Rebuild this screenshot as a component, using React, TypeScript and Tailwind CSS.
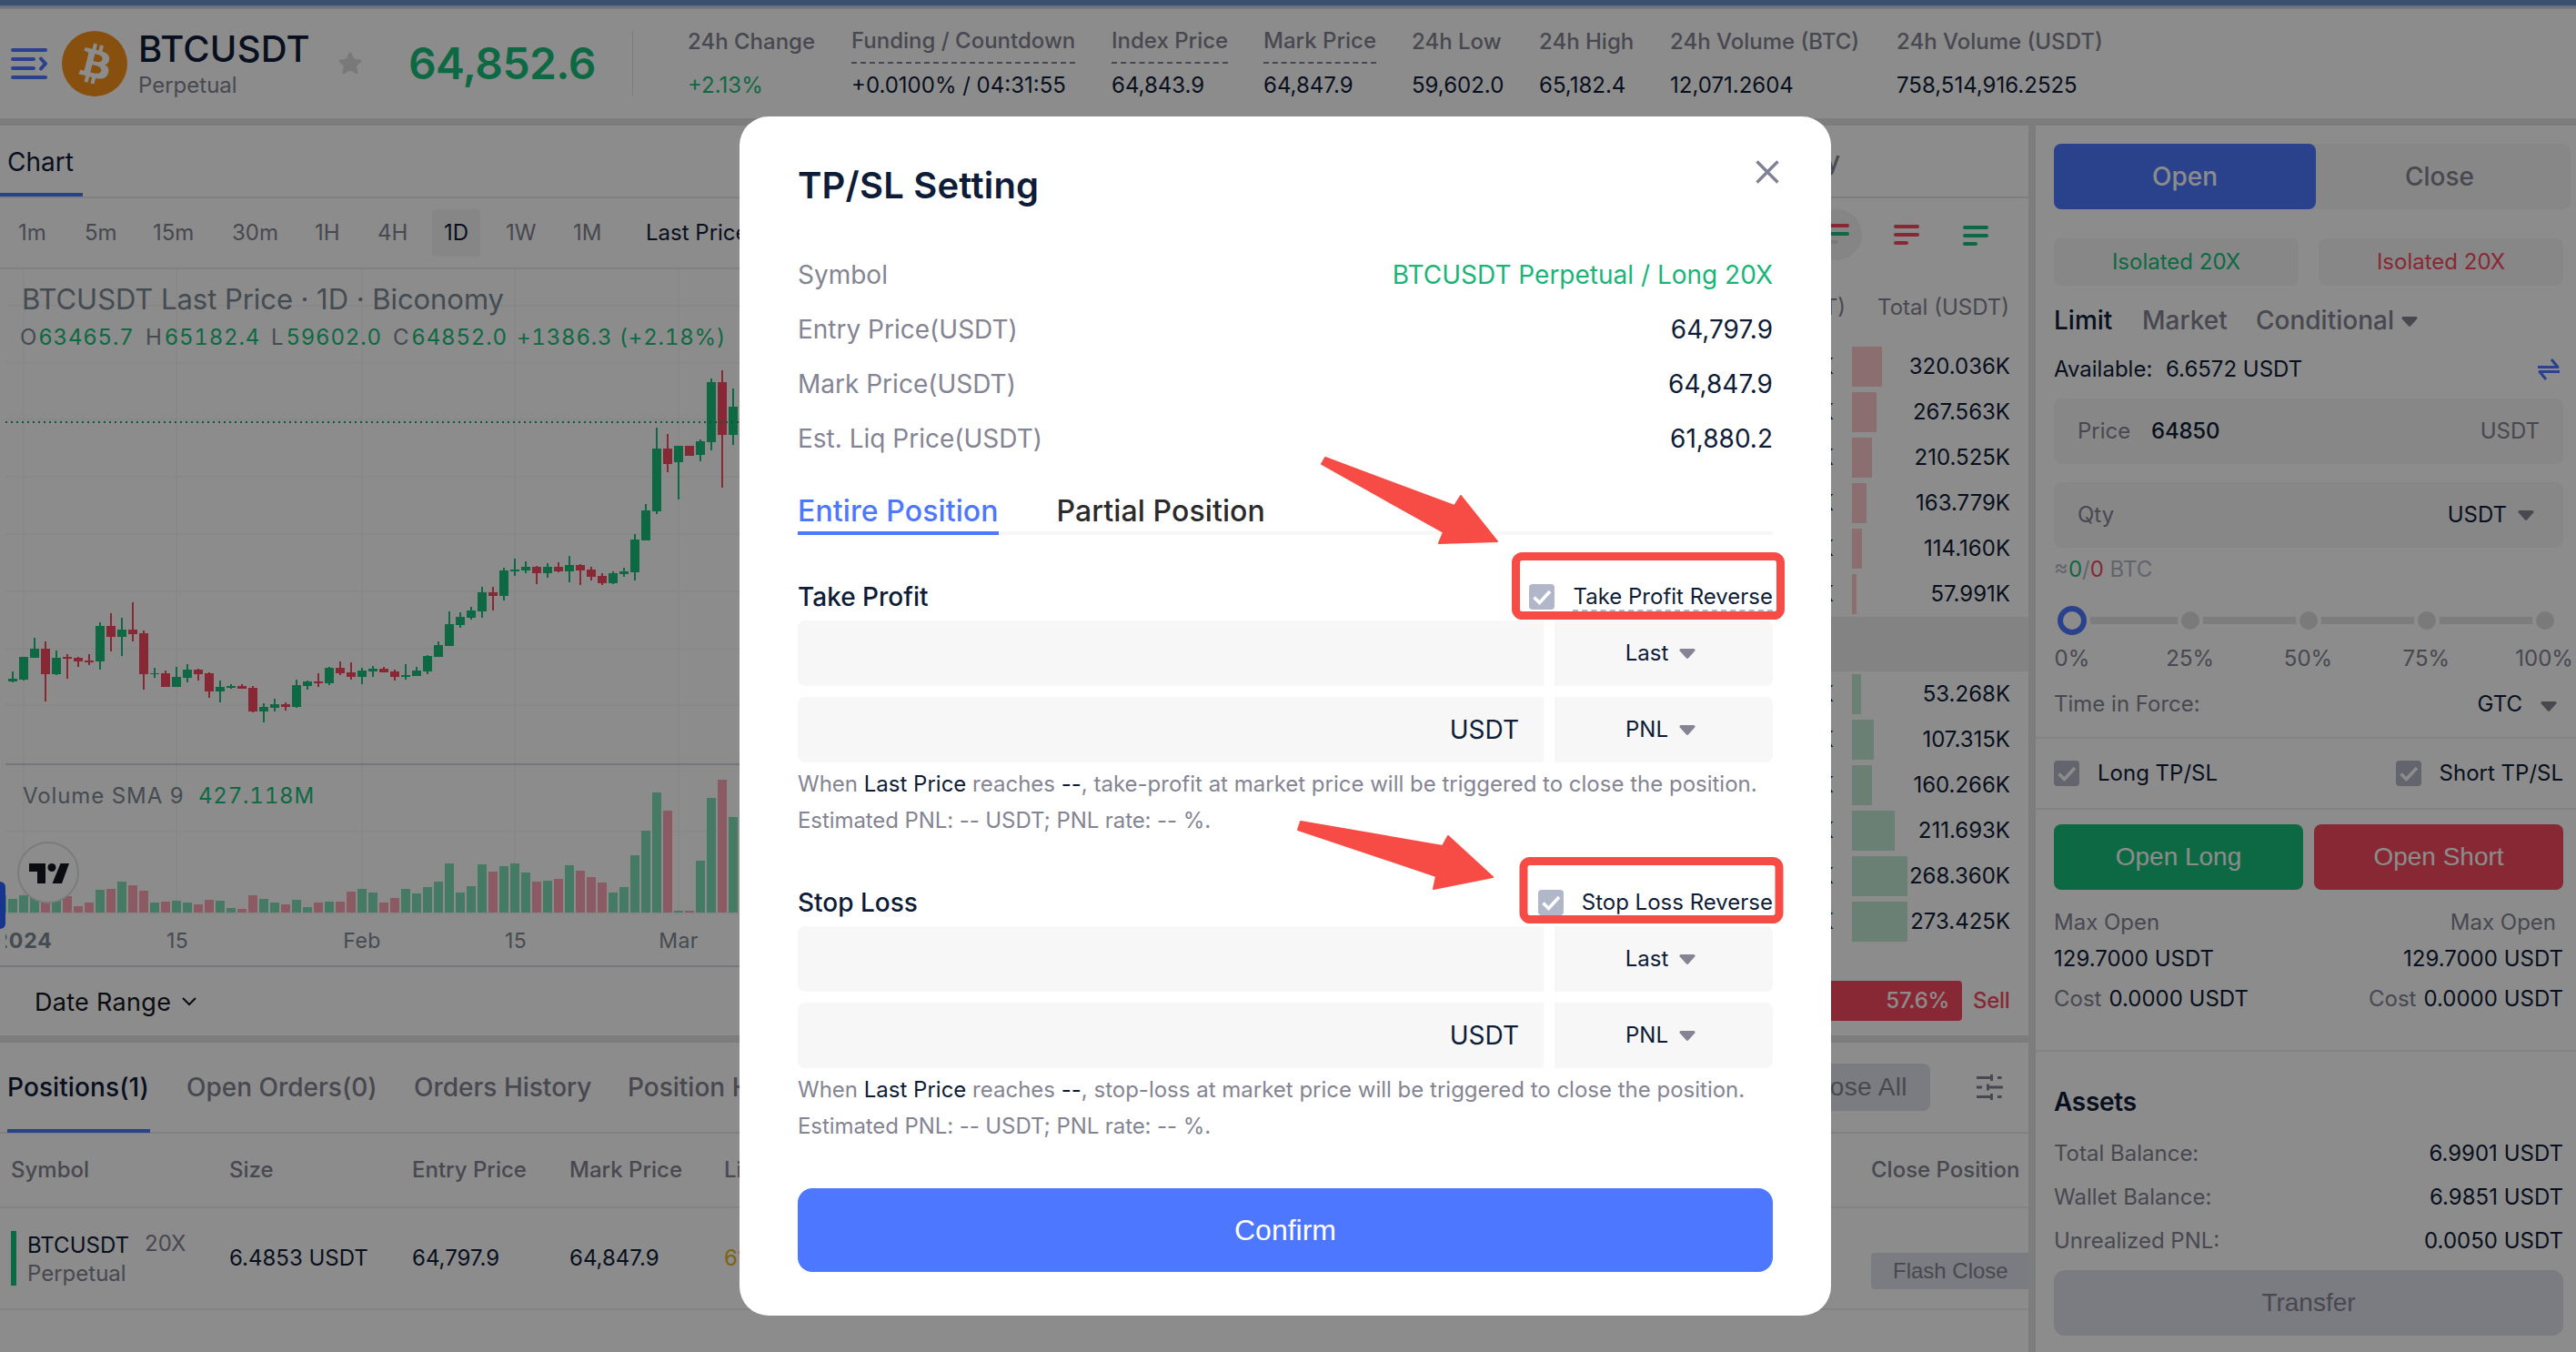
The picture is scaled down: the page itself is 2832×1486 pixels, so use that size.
import type { ReactNode } from 'react';
import clsx from 'clsx';

// ─── Types & Interfaces ──────────────────────────────────────────
interface Stat {
  label: string;
  value: string;
  width: string;
  dashed?: boolean;
  up?: boolean;
}

type Side = 'g' | 'r';
// side, high, body top, body bottom, low, volume top
type Candle = [Side, number, number, number, number, number];

// ─── Data ─────────────────────────────────────────────────────────
const STATS: Stat[] = [
  { label: '24h Change', value: '+2.13%', width: 'w-[180px]', up: true },
  { label: 'Funding / Countdown', value: '+0.0100% / 04:31:55', width: 'w-[286px]', dashed: true },
  { label: 'Index Price', value: '64,843.9', width: 'w-[167px]', dashed: true },
  { label: 'Mark Price', value: '64,847.9', width: 'w-[163px]', dashed: true },
  { label: '24h Low', value: '59,602.0', width: 'w-[140px]' },
  { label: '24h High', value: '65,182.4', width: 'w-[144px]' },
  { label: '24h Volume (BTC)', value: '12,071.2604', width: 'w-[249px]' },
  { label: '24h Volume (USDT)', value: '758,514,916.2525', width: 'w-[260px]' },
];

const INTERVALS = [
  { label: '1m', width: 'w-[73px]' },
  { label: '5m', width: 'w-[75px]' },
  { label: '15m', width: 'w-[87px]' },
  { label: '30m', width: 'w-[91px]' },
  { label: '1H', width: 'w-[69px]' },
  { label: '4H', width: 'w-[60px]' },
];

const ASKS = [
  { total: '320.036K', width: 33 },
  { total: '267.563K', width: 27 },
  { total: '210.525K', width: 22 },
  { total: '163.779K', width: 16 },
  { total: '114.160K', width: 11 },
  { total: '57.991K', width: 5 },
];

const BIDS = [
  { total: '53.268K', width: 10 },
  { total: '107.315K', width: 24 },
  { total: '160.266K', width: 22 },
  { total: '211.693K', width: 47 },
  { total: '268.360K', width: 61 },
  { total: '273.425K', width: 61 },
];

const CANDLES: Candle[] = [
  ['g', 1074, 1098, 1107, 1110, 396], ['g', 1026, 1026, 1101, 1104, 386], ['g', 963, 999, 1029, 1029, 384],
  ['r', 975, 999, 1083, 1173, 380], ['g', 1005, 1029, 1083, 1086, 392], ['r', 1017, 1026, 1032, 1098, 388],
  ['r', 1026, 1029, 1041, 1059, 414], ['r', 1017, 1038, 1044, 1053, 405], ['g', 912, 924, 1041, 1068, 372],
  ['r', 882, 924, 960, 1008, 370], ['g', 897, 936, 960, 1023, 351], ['r', 846, 936, 951, 975, 360],
  ['r', 939, 948, 1083, 1134, 374], ['g', 1062, 1080, 1083, 1095, 405], ['r', 1071, 1080, 1125, 1125, 403],
  ['g', 1059, 1092, 1125, 1125, 400], ['g', 1050, 1068, 1095, 1110, 405], ['r', 1065, 1068, 1083, 1104, 410],
  ['r', 1077, 1080, 1140, 1161, 398], ['g', 1104, 1125, 1140, 1176, 400], ['g', 1116, 1122, 1128, 1131, 419],
  ['r', 1116, 1122, 1131, 1131, 421], ['r', 1122, 1128, 1206, 1209, 386], ['g', 1179, 1191, 1206, 1242, 396],
  ['g', 1164, 1182, 1194, 1206, 405], ['r', 1176, 1182, 1191, 1203, 410], ['g', 1101, 1119, 1191, 1194, 398],
  ['g', 1104, 1107, 1122, 1134, 417], ['r', 1080, 1107, 1113, 1125, 405], ['g', 1059, 1062, 1113, 1119, 403],
  ['r', 1041, 1062, 1080, 1086, 403], ['r', 1044, 1077, 1092, 1101, 377], ['g', 1062, 1071, 1092, 1116, 370],
  ['g', 1056, 1065, 1074, 1092, 379], ['r', 1059, 1065, 1077, 1077, 405], ['r', 1068, 1074, 1092, 1104, 393],
  ['g', 1050, 1086, 1092, 1101, 370], ['g', 1059, 1071, 1089, 1089, 381], ['g', 1020, 1023, 1074, 1083, 365],
  ['g', 975, 987, 1026, 1026, 351], ['g', 876, 918, 990, 990, 304], ['g', 879, 894, 921, 930, 379],
  ['g', 861, 873, 897, 903, 363], ['g', 795, 813, 876, 897, 306], ['r', 795, 813, 825, 873, 325],
  ['g', 732, 741, 825, 840, 311], ['g', 702, 738, 744, 759, 304], ['g', 711, 729, 741, 750, 327],
  ['r', 726, 729, 750, 786, 351], ['g', 717, 729, 750, 765, 348], ['r', 714, 729, 744, 747, 344],
  ['g', 693, 723, 744, 780, 308], ['r', 720, 723, 741, 789, 323], ['r', 729, 738, 762, 774, 339],
  ['r', 750, 759, 783, 789, 353], ['g', 744, 750, 783, 786, 379], ['g', 732, 744, 753, 762, 365],
  ['g', 621, 639, 747, 774, 283], ['g', 522, 543, 642, 642, 219], ['g', 270, 339, 546, 555, 120],
  ['r', 291, 339, 390, 417, 167], ['g', 330, 330, 384, 507, 426], ['r', 330, 330, 363, 363, 426],
  ['g', 309, 315, 360, 381, 297], ['g', 108, 120, 318, 345, 134], ['r', 81, 120, 294, 468, 87],
  ['g', 141, 201, 294, 327, 184],
];

const priceY = (v: number) => 84 + v / 3;
const volumeY = (v: number) => 524 + v / 2.354;

// ─── Small pieces ─────────────────────────────────────────────────
function Caret({ className }: { className?: string }) {
  return (
    <svg viewBox="0 0 18 11" className={clsx('h-[11px] w-[18px] shrink-0 fill-[#848493]', className)}>
      <path d="M2 0h14a1.6 1.6 0 0 1 1.2 2.6l-7 7.6a1.6 1.6 0 0 1-2.4 0l-7-7.6A1.6 1.6 0 0 1 2 0z" />
    </svg>
  );
}

function Check({ className }: { className?: string }) {
  return (
    <svg viewBox="0 0 28 28" className={clsx('h-7 w-7 shrink-0', className)}>
      <rect width="28" height="28" rx="4" fill="#b2b6c9" />
      <path d="M5.5 14.5l6 6L23 8" fill="none" stroke="#fff" strokeWidth="3.6" />
    </svg>
  );
}

function DepthIcon({ colors }: { colors: string[] }) {
  return (
    <svg viewBox="0 0 28 24" className="h-6 w-7">
      <rect x="0" y="0" width="28" height="4" rx="2" fill={colors[0]} />
      <rect x="0" y="9" width="28" height="4" rx="2" fill={colors[1]} />
      <rect x="0" y="18" width="16" height="4" rx="2" fill={colors[2]} />
    </svg>
  );
}

// ─── Header ───────────────────────────────────────────────────────
function Header() {
  return (
    <header className="flex h-[120px] items-center">
      <svg viewBox="0 0 40 36" className="ml-3 h-9 w-10 shrink-0" fill="none" stroke="#4d77ff" strokeWidth="4" strokeLinecap="round">
        <path d="M2 3h36M2 13h23M2 23h23M2 33h36" />
        <path d="M33 12.5l5 5.500-5 5.500" strokeLinejoin="round" />
      </svg>
      <svg viewBox="0 0 32 32" className="ml-4 h-[72px] w-[72px] shrink-0">
        <circle cx="16" cy="16" r="16" fill="#f7931a" />
        <path
          fill="#fff"
          d="M23.189 14.020c.314-2.096-1.283-3.223-3.465-3.975l.708-2.840-1.728-.430-.690 2.765c-.454-.114-.920-.220-1.385-.326l.695-2.783L15.596 6l-.708 2.839c-.376-.086-.746-.170-1.104-.260l.002-.009-2.384-.595-.460 1.846s1.283.294 1.256.312c.700.175.826.638.805 1.006l-.806 3.235c.048.012.110.030.180.057l-.183-.045-1.130 4.532c-.086.212-.303.531-.793.410.018.025-1.256-.313-1.256-.313l-.858 1.978 2.250.561c.418.105.828.215 1.231.318l-.715 2.872 1.727.430.708-2.840c.472.127.930.245 1.378.357l-.706 2.828 1.728.430.715-2.866c2.948.558 5.164.333 6.097-2.333.752-2.146-.037-3.385-1.588-4.192 1.130-.260 1.980-1.003 2.207-2.538zm-3.950 5.538c-.533 2.147-4.148.986-5.320.695l.950-3.805c1.172.293 4.929.872 4.370 3.110zm.535-5.569c-.487 1.953-3.495.960-4.470.717l.860-3.450c.975.243 4.118.696 3.610 2.733z"
        />
      </svg>
      <div className="ml-3 flex w-[219px] flex-col pt-0.5">
        <span className="text-[40px] font-medium leading-[46px] tracking-[0.2px] text-[#0f1c38]">BTCUSDT</span>
        <span className="text-2xl leading-[34px] text-[#848493]">Perpetual</span>
      </div>
      <svg viewBox="0 0 28 28" className="h-7 w-7 shrink-0 fill-[#dcdcdc]">
        <path d="M14 1.500c.8 0 1.300.6 1.600 1.300l2.600 5.800 6.500.8c1.900.2 2.400 1.600 1.100 2.900l-4.600 4.300 1.200 6.400c.3 1.900-.8 2.700-2.500 1.800L14 21.600l-5.900 3.200c-1.700.9-2.800.1-2.500-1.800l1.200-6.400-4.600-4.300c-1.300-1.300-.8-2.700 1.100-2.900l6.500-.8 2.600-5.800c.3-.7.8-1.300 1.600-1.300z" />
      </svg>
      <span className="ml-[50px] w-[246px] text-5xl font-semibold tracking-[-0.6px] text-[#19c07b]">64,852.6</span>
      <div className="h-[72px] w-px bg-[#e6e6e6]" />
      <div className="ml-[60px] flex">
        {STATS.map((s) => (
          <div key={s.label} className={clsx('flex shrink-0 flex-col items-start whitespace-nowrap text-2xl', s.width)}>
            <span
              className={clsx(
                'h-[37px] font-medium',
                s.dashed ? 'border-b-2 border-dashed border-[#848493] leading-[23px]' : 'leading-[25px]',
                'text-[#848493]',
              )}
            >
              {s.label}
            </span>
            <span className={clsx('mt-[11px] leading-[26px]', s.up ? 'text-[#19c07b]' : 'text-[#0f1c38]')}>{s.value}</span>
          </div>
        ))}
      </div>
    </header>
  );
}

// ─── Chart ────────────────────────────────────────────────────────
function PriceChart() {
  return (
    <div className="relative h-[765px]">
      <svg viewBox="0 0 1500 765" className="h-[765px] w-[1500px]" shapeRendering="crispEdges">
        <g stroke="#f7f7f8" strokeWidth="2">
          {[26, 194, 398, 566, 746].map((x) => (
            <path key={x} d={`M${x} 0V708`} />
          ))}
          {[40, 103, 165, 228, 291, 354, 417, 479, 618, 708].map((y) => (
            <path key={y} d={`M6 ${y}H1500`} />
          ))}
        </g>
        <path d="M6 544H1500" stroke="#d2d6de" strokeWidth="2" />
        <rect x="6" y={volumeY(386)} width="1" height={707 - volumeY(386)} fill="#7fdeb6" />
        {CANDLES.map(([side, high, top, bottom, low, vol], i) => {
          const x = 14 + i * 12;
          const fill = side === 'g' ? '#19c07b' : '#f84960';
          return (
            <g key={i}>
              <rect x={x - 5} y={volumeY(vol)} width="10" height={707 - volumeY(vol)} fill={side === 'g' ? '#7fdeb6' : '#fea5b2'} />
              <rect x={x - 1} y={priceY(high)} width="2" height={(low - high) / 3} fill={fill} />
              <rect x={x - 5} y={priceY(top)} width="10" height={(bottom - top) / 3} fill={fill} />
            </g>
          );
        })}
        <path d="M6 168H1500" stroke="#19a06a" strokeWidth="2" strokeDasharray="2 4" />
      </svg>

      {/* Legends over the plot */}
      <div className="absolute left-6 top-[17px] whitespace-nowrap text-[31px] leading-[32px] tracking-[-0.05px] text-[#7d8a95]">
        BTCUSDT Last Price · 1D · Biconomy
      </div>
      <div className="absolute left-[22px] top-[58px] flex whitespace-nowrap text-2xl leading-[34px] tracking-[0.8px] tabular-nums text-[#19c07b]">
        <span className="w-[138px]"><span className="pr-px text-[#7d8a95]">O</span>63465.7</span>
        <span className="w-[138px]"><span className="pr-0.5 text-[#7d8a95]">H</span>65182.4</span>
        <span className="w-[134px]"><span className="pr-0.5 text-[#7d8a95]">L</span>59602.0</span>
        <span className="w-[136px]"><span className="pr-0.5 text-[#7d8a95]">C</span>64852.0</span>
        <span>+1386.3 (+2.18%)</span>
      </div>
      <div className="absolute left-[25px] top-[562px] flex whitespace-nowrap text-2xl leading-[34px] tracking-[0.9px] text-[#7d8a95]">
        <span className="w-[193px]">Volume SMA 9</span>
        <span className="tracking-[0.8px] tabular-nums text-[#19c07b]">427.118M</span>
      </div>
      <svg viewBox="0 0 68 68" className="absolute left-[19px] top-[629px] h-[68px] w-[68px]">
        <circle cx="34" cy="34" r="33" fill="#fff" stroke="#dfe0e4" strokeWidth="2" />
        <path d="M13 24h18v22h-9V33h-9zM49 46H38.500l9-22H57z" fill="#131722" />
        <circle cx="38" cy="28.500" r="4.500" fill="#131722" />
      </svg>
      <div className="absolute left-0 top-[673px] h-[52px] w-[6px] rounded-r-md bg-[#2962ff]" />

      {/* Time axis */}
      <div className="absolute left-[6px] top-[720px] h-8 w-[800px] overflow-hidden text-[23px] leading-[36px] tracking-[0.4px] text-[#7d8a95]">
        <span className="absolute left-[20px] -translate-x-1/2 font-bold tracking-[1px]">2024</span>
        <span className="absolute left-[189px] -translate-x-1/2">15</span>
        <span className="absolute left-[392px] -translate-x-1/2">Feb</span>
        <span className="absolute left-[561px] -translate-x-1/2">15</span>
        <span className="absolute left-[740px] -translate-x-1/2">Mar</span>
      </div>
    </div>
  );
}

function ChartPanel() {
  return (
    <section className="flex min-w-0 flex-1 flex-col">
      <div className="flex h-20 border-b-2 border-[#ebebeb]">
        <div className="flex h-[78px] w-[91px] items-center border-b-4 border-[#4d77ff] pl-2 pt-1.5 text-[28px] text-[#0f1c38]">Chart</div>
      </div>
      <div className="flex h-[78px] items-center border-b-2 border-[#ebebeb] pl-5 text-2xl text-[#848493]">
        {INTERVALS.map((t) => (
          <span key={t.label} className={t.width}>{t.label}</span>
        ))}
        <span className="flex h-[52px] w-[53px] items-center justify-center rounded bg-[#f5f5f5] text-[#0f1c38]">1D</span>
        <span className="ml-7 w-[74px]">1W</span>
        <span className="w-[80px]">1M</span>
        <span className="text-[#0f1c38]">Last Price</span>
      </div>
      <PriceChart />
      <div className="flex flex-1 items-center border-t-2 border-[#d9dbe0] pl-[38px] pt-[3px] text-[27px] text-[#131722]">
        <span className="tracking-[0.3px]">Date Range</span>
        <svg viewBox="0 0 16 10" className="mb-0.5 ml-3 h-[10px] w-4" fill="none" stroke="#131722" strokeWidth="2">
          <path d="M1 1l7 7 7-7" />
        </svg>
      </div>
    </section>
  );
}

// ─── Order book ───────────────────────────────────────────────────
function BookRow({ total, width, color }: { total: string; width: number; color: string }) {
  return (
    <div className="flex h-[50px] items-center text-2xl text-[#0f1c38]">
      <span className="w-[156px] text-right">12.408K</span>
      <div className="relative ml-5 flex h-11 w-[174px] items-center justify-end">
        <div className={clsx('absolute left-0 top-0 h-11', color)} style={{ width }} />
        <span className="relative">{total}</span>
      </div>
    </div>
  );
}

function OrderBook() {
  return (
    <section className="flex w-[370px] flex-col">
      <div className="flex h-20 items-center border-b-2 border-[#e6e6e6] text-[28px] font-medium text-[#848493]">
        <span className="w-[163px] text-right">History</span>
      </div>
      <div className="flex h-[80px] items-center">
        <div className="ml-[130px] flex h-14 w-[57px] items-center justify-center rounded-full bg-[#f3f3f3]">
          <DepthIcon colors={['#f84960', '#19c07b', '#dcdcdc']} />
        </div>
        <div className="ml-[35px] mt-0.5"><DepthIcon colors={['#f84960', '#f84960', '#f84960']} /></div>
        <div className="ml-12 mt-1"><DepthIcon colors={['#19c07b', '#19c07b', '#19c07b']} /></div>
      </div>
      <div className="flex h-[80px] items-center whitespace-nowrap text-2xl text-[#848493]">
        <span className="w-[169px] text-right">Amt (USDT)</span>
        <span className="w-[180px] text-right">Total (USDT)</span>
      </div>
      {ASKS.map((r) => (
        <BookRow key={r.total} {...r} color="bg-[#fdcacc]" />
      ))}
      <div className="h-[60px] bg-[#efefef]" />
      {BIDS.map((r) => (
        <BookRow key={r.total} {...r} color="bg-[#c2e9d6]" />
      ))}
      <div className="mt-10 flex h-11 items-center">
        <div className="flex h-11 w-[297px] items-center justify-end rounded-r bg-[#f84960] pr-3.5 text-2xl font-medium tracking-[-0.3px] text-white">57.6%</div>
        <span className="ml-3 text-2xl font-medium tracking-[-0.3px] text-[#f84960]">Sell</span>
      </div>
    </section>
  );
}

// ─── Positions ────────────────────────────────────────────────────
function Positions() {
  return (
    <section className="flex flex-1 flex-col border-t-8 border-[#e3e3e3] text-2xl text-[#0f1c38]">
      <div className="flex h-[100px] items-center border-b-2 border-[#e9e9e9] text-[28px] font-medium text-[#848493]">
        <div className="ml-2 flex h-[99px] w-[157px] items-center border-b-4 border-[#4d77ff] pt-1.5 tracking-[0.1px] text-[#0f1c38]">Positions(1)</div>
        <span className="ml-10 w-[250px] pt-0.5">Open Orders(0)</span>
        <span className="w-[235px] pt-0.5">Orders History</span>
        <span className="pt-0.5">Position History</span>
        <div className="ml-auto flex h-[52px] w-[180px] items-center justify-end rounded-lg bg-[#dfe2ec] pr-[25px] font-['Liberation_Sans',sans-serif] font-normal tracking-[0.4px]">
          Close All
        </div>
        <svg viewBox="0 0 30 28" className="ml-[51px] mr-[27px] h-7 w-[30px]" fill="none" stroke="#848493" strokeWidth="3">
          <path d="M0 3.500h18M16.500 0v7M23 3.500h4.500M0 14h6M12 14h17M12.500 10.500v7M0 24.500h18M16.500 21v7M23 24.500h4.500" />
        </svg>
      </div>
      <div className="flex h-[82px] items-center border-b-2 border-[#efefef] pl-3 font-medium text-[#848493]">
        <span className="w-60">Symbol</span>
        <span className="w-[201px]">Size</span>
        <span className="w-[173px]">Entry Price</span>
        <span className="w-[170px]">Mark Price</span>
        <span>Liq. Price</span>
        <span className="ml-auto w-[173px]">Close Position</span>
      </div>
      <div className="flex h-[112px] items-center border-b-2 border-[#efefef] pl-3">
        <div className="flex h-[60px] w-60 border-l-[6px] border-[#19c07b] pl-3">
          <div className="flex w-[129px] flex-col leading-[31px]">
            <span>BTCUSDT</span>
            <span className="text-[#848493]">Perpetual</span>
          </div>
          <span className="leading-7 text-[#848493]">20X</span>
        </div>
        <span className="w-[201px]">6.4853 USDT</span>
        <span className="w-[173px]">64,797.9</span>
        <span className="w-[170px]">64,847.9</span>
        <span className="text-[#e6b422]">61,880.2</span>
        <div className="ml-auto mt-7 flex h-10 w-[173px] items-center rounded-l bg-[#dfe2ec] pl-6 font-['Liberation_Sans',sans-serif] text-[#848493]">
          Flash Close
        </div>
      </div>
    </section>
  );
}

// ─── Order form ───────────────────────────────────────────────────
function OrderForm() {
  return (
    <aside className="flex w-[602px] shrink-0 flex-col border-l-8 border-[#e3e3e3] text-2xl text-[#0f1c38]">
      <div className="ml-5 mt-5 flex h-[72px] w-[568px] rounded-lg bg-[#f6f6f6] text-[28px] font-medium">
        <div className="flex w-72 items-center justify-center rounded-lg bg-[#4d77ff] pt-0.5 text-white">Open</div>
        <div className="flex flex-1 items-center justify-center pr-2 pt-0.5 text-[#848493]">Close</div>
      </div>
      <div className="ml-5 mt-8 flex gap-[22px]">
        <div className="flex h-[52px] w-[269px] items-center justify-center rounded-lg bg-[#f6f6f6] text-[#19c07b]">Isolated 20X</div>
        <div className="flex h-[52px] w-[269px] items-center justify-center rounded-lg bg-[#f6f6f6] text-[#f84960]">Isolated 20X</div>
      </div>
      <div className="ml-5 mt-[19px] flex h-10 items-center text-[28px] font-medium text-[#848493]">
        <span className="w-[97px] text-[#0f1c38]">Limit</span>
        <span className="w-[125px]">Market</span>
        <span>Conditional</span>
        <Caret className="ml-2" />
      </div>
      <div className="ml-5 mt-[15px] flex h-[36px] w-[560px] items-center pr-1">
        <span className="w-[123px]">Available:</span>
        <span>6.6572 USDT</span>
        <svg viewBox="0 0 24 24" className="ml-auto h-6 w-6" fill="none" stroke="#4d77ff" strokeWidth="3" strokeLinejoin="round">
          <path d="M0 9.500h22L15 1M24 14.500H2L9 23" />
        </svg>
      </div>
      <div className="ml-5 mt-3.5 flex h-[72px] w-[560px] items-center rounded-lg bg-[#f6f6f6] px-[26px] text-[#848493]">
        <span className="w-[81px]">Price</span>
        <span className="font-medium tracking-[-0.2px] text-[#0f1c38]">64850</span>
        <span className="ml-auto">USDT</span>
      </div>
      <div className="ml-5 mt-5 flex h-[72px] w-[560px] items-center rounded-lg bg-[#f6f6f6] pl-[26px] pr-8 text-[#848493]">
        <span>Qty</span>
        <span className="ml-auto mr-3 text-[#0f1c38]">USDT</span>
        <Caret />
      </div>
      <div className="ml-5 mt-1.5 h-9 leading-9 text-[#b2b6c9]">
        ≈<span className="text-[#19c07b]">0</span>/<span className="text-[#f84960]">0</span> BTC
      </div>
      <svg viewBox="0 0 560 36" className="ml-5 mt-5 h-9 w-[560px]">
        <path d="M40 18H540" stroke="#e3e3e3" strokeWidth="8" />
        {[150, 280, 410, 540].map((x) => (
          <circle key={x} cx={x} cy="18" r="12" fill="#dedede" stroke="#fff" strokeWidth="4" />
        ))}
        <circle cx="20" cy="18" r="13" fill="#fff" stroke="#4d77ff" strokeWidth="6" />
      </svg>
      <div className="mt-1.5 flex h-9 items-center text-[#848493]">
        <span className="ml-[5px] w-[70px] text-center">0%</span>
        <span className="ml-[60px] w-[70px] text-center">25%</span>
        <span className="ml-[60px] w-[70px] text-center">50%</span>
        <span className="ml-[60px] w-[70px] text-center">75%</span>
        <span className="ml-[60px] w-[70px] text-center">100%</span>
      </div>
      <div className="flex h-[70px] items-center border-b-2 border-[#efefef] pb-1 pl-5 pr-[21px]">
        <span className="text-[#848493]">Time in Force:</span>
        <span className="ml-auto mr-5">GTC</span>
        <Caret className="mt-1" />
      </div>
      <div className="flex h-[78px] items-center border-b-2 border-[#efefef] pl-5 pr-[14px]">
        <Check />
        <span className="ml-5">Long TP/SL</span>
        <span className="ml-auto mr-5 h-7"><Check /></span>
        <span>Short TP/SL</span>
      </div>
      <div className="ml-5 mt-4 flex gap-3 font-['Liberation_Sans',sans-serif] text-[28px] text-white">
        <div className="flex h-[72px] w-[274px] items-center justify-center rounded-lg bg-[#19c07b]">Open Long</div>
        <div className="flex h-[72px] w-[274px] items-center justify-center rounded-lg bg-[#f84960]">Open Short</div>
      </div>
      <div className="ml-5 mt-4 flex h-10 w-[560px] items-center justify-between pr-2 text-[#848493]">
        <span>Max Open</span>
        <span>Max Open</span>
      </div>
      <div className="ml-5 flex h-10 w-[560px] items-center justify-between">
        <span>129.7000 USDT</span>
        <span>129.7000 USDT</span>
      </div>
      <div className="ml-5 mt-1 flex h-10 w-[560px] items-center justify-between">
        <span><span className="mr-2 text-[#848493]">Cost</span>0.0000 USDT</span>
        <span><span className="mr-2 text-[#848493]">Cost</span>0.0000 USDT</span>
      </div>
      <div className="mt-9 border-t-2 border-[#efefef]" />
      <div className="ml-5 mt-[35px] h-10 text-[28px] font-semibold leading-10 tracking-[-0.3px]">Assets</div>
      <div className="ml-5 mt-[13px] flex w-[560px] flex-col">
        {[
          ['Total Balance:', '6.9901 USDT'],
          ['Wallet Balance:', '6.9851 USDT'],
          ['Unrealized PNL:', '0.0050 USDT'],
        ].map(([label, value]) => (
          <div key={label} className="flex h-12 items-center justify-between">
            <span className="text-[#848493]">{label}</span>
            <span>{value}</span>
          </div>
        ))}
      </div>
      <div className="ml-5 mt-2 flex h-[72px] w-[560px] items-center justify-center rounded-xl bg-[#dfe2ec] font-['Liberation_Sans',sans-serif] text-[28px] text-[#848493]">
        Transfer
      </div>
    </aside>
  );
}

// ─── TP/SL dialog ─────────────────────────────────────────────────
function Field({ children, className }: { children?: ReactNode; className?: string }) {
  return <div className={clsx('flex h-[72px] items-center bg-[#f7f7f7]', className)}>{children}</div>;
}

function TriggerBlock({ title, reverse, kind }: { title: string; reverse: string; kind: string }) {
  return (
    <div className="h-[336px]">
      <div className="flex h-[42px] items-start justify-between">
        <span className="text-[28px] font-medium leading-[32px]">{title}</span>
        <div className="flex items-start">
          <Check className="mt-0.5" />
          <span className="ml-5 h-[32px] border-b-2 border-dashed border-[#b2b6c9] text-2xl leading-[31px]">{reverse}</span>
        </div>
      </div>
      <div className="flex gap-3">
        <Field className="flex-1 rounded-l-lg" />
        <Field className="w-60 justify-center rounded-r-lg pr-[7px] text-2xl">
          Last <Caret className="ml-3" />
        </Field>
      </div>
      <div className="mt-3 flex gap-3">
        <Field className="flex-1 justify-end rounded-l-lg pr-[27px] text-[28px]">USDT</Field>
        <Field className="w-60 justify-center rounded-r-lg pr-[7px] text-2xl">
          PNL <Caret className="ml-3" />
        </Field>
      </div>
      <p className="mt-1 whitespace-nowrap text-2xl leading-10 text-[#848493]">
        When <span className="text-[#0f1c38]">Last Price</span> reaches <span className="text-[#0f1c38]">--</span>, {kind} at market price will be
        triggered to close the position.
        <br />
        <span className="tracking-[-0.08px]">Estimated PNL: -- USDT; PNL rate: -- %.</span>
      </p>
    </div>
  );
}

function TpSlDialog() {
  const rows = [
    ['Entry Price(USDT)', '64,797.9'],
    ['Mark Price(USDT)', '64,847.9'],
    ['Est. Liq Price(USDT)', '61,880.2'],
  ];

  return (
    <div className="absolute left-[813px] top-[128px] flex h-[1318px] w-[1200px] flex-col rounded-[32px] bg-white px-16 text-[#0f1c38]">
      <div className="mt-[49px] flex justify-between">
        <h2 className="text-[40px] font-semibold leading-[54px] tracking-[0.2px]">TP/SL Setting</h2>
        <svg viewBox="0 0 26 26" className="-mr-[7px] -mt-px h-[26px] w-[26px]" fill="none" stroke="#7f8194" strokeWidth="3.400">
          <path d="M1.500 1.500l23 23M24.500 1.500l-23 23" />
        </svg>
      </div>
      <div className="mt-[41px] flex flex-col text-[28px]">
        <div className="flex h-[60px] items-center justify-between">
          <span className="text-[#848493]">Symbol</span>
          <span className="text-[#19b578]">BTCUSDT Perpetual / Long 20X</span>
        </div>
        {rows.map(([label, value]) => (
          <div key={label} className="flex h-[60px] items-center justify-between">
            <span className="text-[#848493]">{label}</span>
            <span>{value}</span>
          </div>
        ))}
      </div>
      <div className="mt-[26px] flex h-[50px] gap-16 border-b-4 border-[#f7f7f7] text-[32px] font-medium tracking-[0.1px]">
        <span className="h-[50px] border-b-4 border-[#4d77ff] leading-[48px] text-[#4d77ff]">Entire Position</span>
        <span className="leading-[48px] text-[#2b2b2b]">Partial Position</span>
      </div>
      <div className="mt-[52px]">
        <TriggerBlock title="Take Profit" reverse="Take Profit Reverse" kind="take-profit" />
        <TriggerBlock title="Stop Loss" reverse="Stop Loss Reverse" kind="stop-loss" />
      </div>
      <div className="-mt-1.5 flex h-[92px] items-center justify-center rounded-2xl bg-[#4d77ff] font-['Liberation_Sans',sans-serif] text-[32px] text-white">
        Confirm
      </div>
    </div>
  );
}

// Red marker boxes and arrows drawn on top of the dialog
function Annotations() {
  return (
    <svg viewBox="0 0 2832 1486" className="absolute inset-0 h-[1486px] w-[2832px]">
      <g fill="none" stroke="#f74c46" strokeWidth="9">
        <rect x="1666.500" y="611.500" width="291" height="65" rx="7" />
        <rect x="1675" y="946.500" width="281" height="64" rx="7" />
      </g>
      <g fill="#f74c46" stroke="#f74c46" strokeWidth="2" strokeLinejoin="round">
        <path d="M1457 503L1599 556L1606 545L1646 595L1582 597L1587 585L1453 510Z" />
        <path d="M1430 903L1586 930L1592 919L1641 964L1576 977L1579 963L1427 912Z" />
      </g>
    </svg>
  );
}

export default function App() {
  return (
    <div className="relative flex h-[1486px] w-[2832px] flex-col overflow-hidden bg-white font-['Inter',sans-serif]">
      <div className="h-[10px] border-b-2 border-[#dcdcdc] bg-[#b9cfec]">
        <div className="h-1.5 bg-[#6b91c4]" />
      </div>
      <Header />
      <div className="flex flex-1 border-t-8 border-[#e3e3e3]">
        <div className="flex w-[2230px] flex-col">
          <div className="flex h-[1000px]">
            <ChartPanel />
            <OrderBook />
          </div>
          <Positions />
        </div>
        <OrderForm />
      </div>

      <div className="absolute inset-0 bg-black/45" />
      <TpSlDialog />
      <Annotations />
    </div>
  );
}
